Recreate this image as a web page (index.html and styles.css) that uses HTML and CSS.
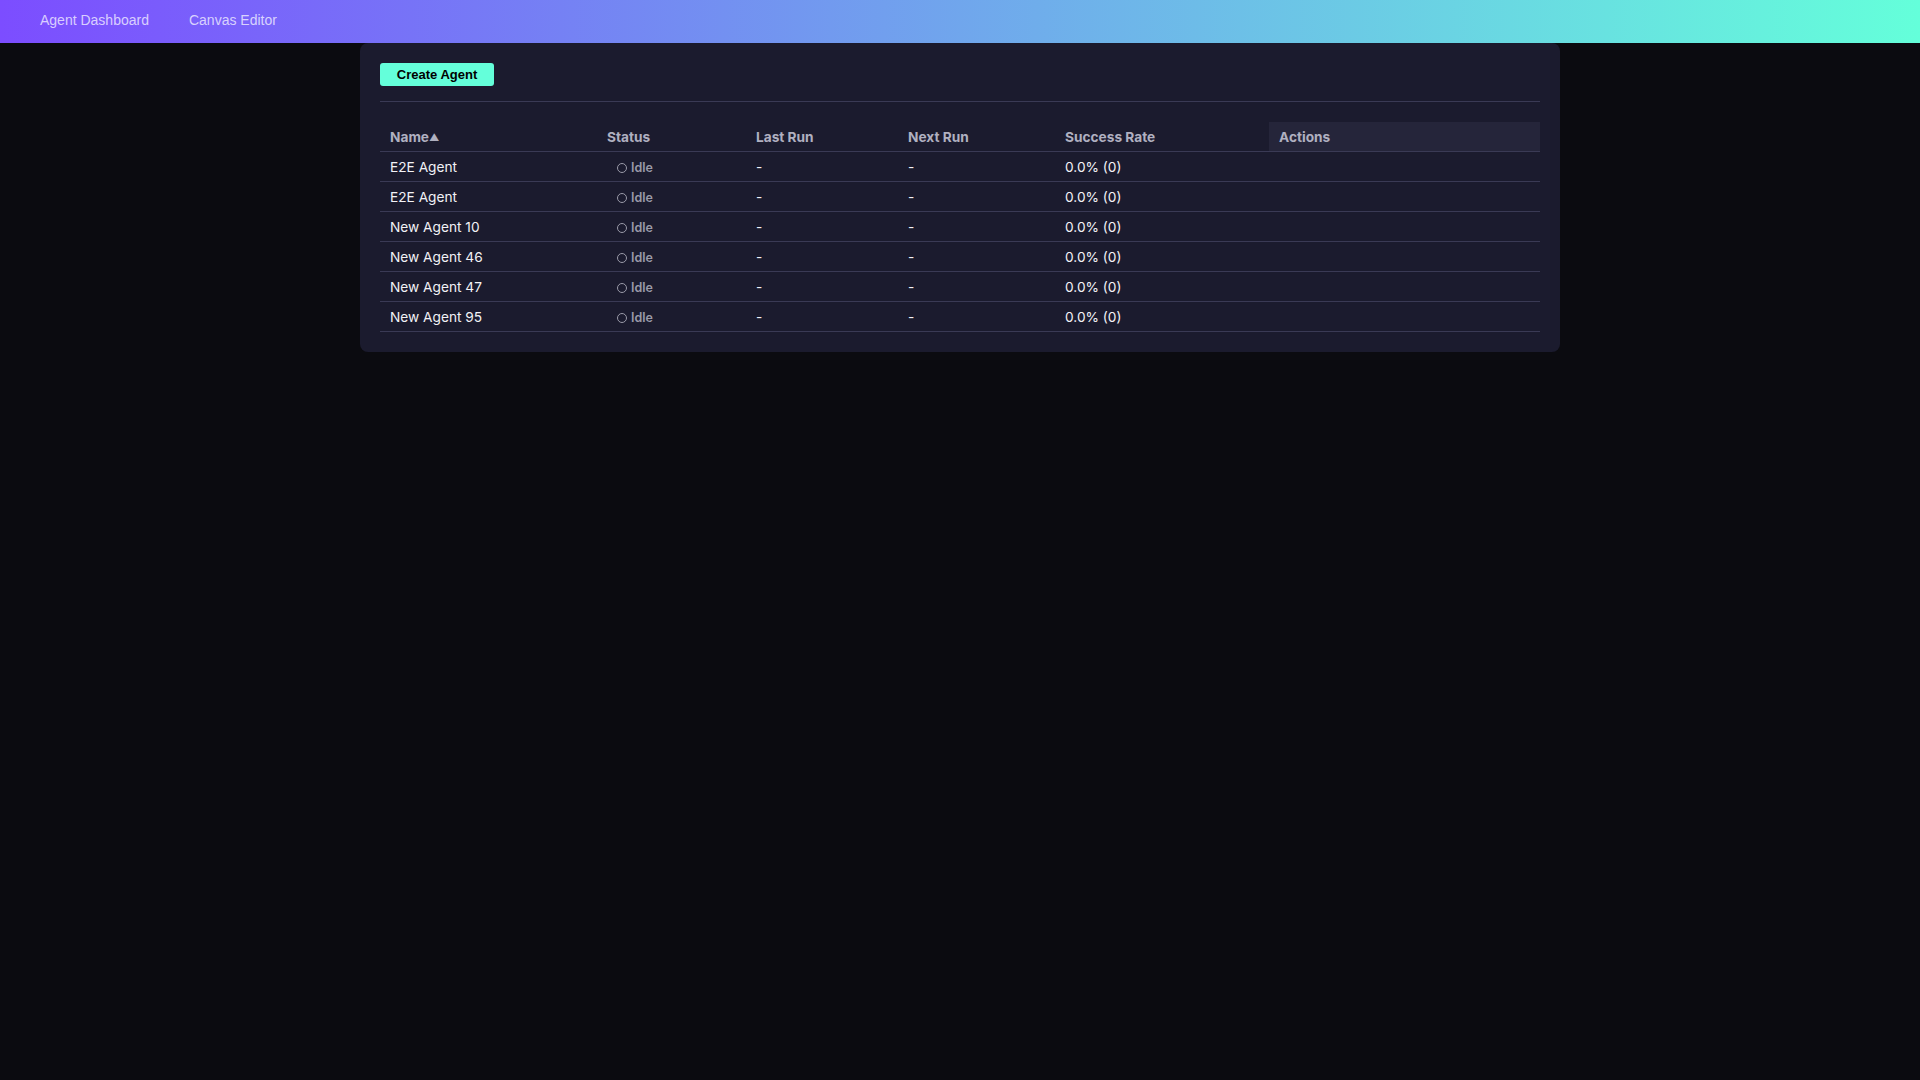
FILE: index.html
```html
<!DOCTYPE html>
<html>
<head>
<meta charset="utf-8">
<title>Agent Dashboard</title>
<link rel="stylesheet" href="styles.css">
</head>
<body>
<header class="topbar">
  <nav class="nav">
    <a class="nav-link" href="#">Agent Dashboard</a>
    <a class="nav-link" href="#">Canvas Editor</a>
  </nav>
</header>
<main class="card">
  <div class="toolbar">
    <button class="btn-create">Create Agent</button>
  </div>
  <table class="agents">
    <colgroup>
      <col class="c-name"><col class="c-status"><col class="c-last"><col class="c-next"><col class="c-rate"><col class="c-actions">
    </colgroup>
    <thead>
      <tr>
        <th>Name<span class="sort">▲</span></th>
        <th>Status</th>
        <th>Last Run</th>
        <th>Next Run</th>
        <th>Success Rate</th>
        <th class="th-actions">Actions</th>
      </tr>
    </thead>
    <tbody>
      <tr><td>E2E Agent</td><td><span class="status"><span class="dot"></span>Idle</span></td><td>-</td><td>-</td><td>0.0% (0)</td><td></td></tr>
      <tr><td>E2E Agent</td><td><span class="status"><span class="dot"></span>Idle</span></td><td>-</td><td>-</td><td>0.0% (0)</td><td></td></tr>
      <tr><td>New Agent 10</td><td><span class="status"><span class="dot"></span>Idle</span></td><td>-</td><td>-</td><td>0.0% (0)</td><td></td></tr>
      <tr><td>New Agent 46</td><td><span class="status"><span class="dot"></span>Idle</span></td><td>-</td><td>-</td><td>0.0% (0)</td><td></td></tr>
      <tr><td>New Agent 47</td><td><span class="status"><span class="dot"></span>Idle</span></td><td>-</td><td>-</td><td>0.0% (0)</td><td></td></tr>
      <tr><td>New Agent 95</td><td><span class="status"><span class="dot"></span>Idle</span></td><td>-</td><td>-</td><td>0.0% (0)</td><td></td></tr>
    </tbody>
  </table>
</main>
</body>
</html>
```
FILE: styles.css
```css
* { box-sizing: border-box; }
html, body {
  margin: 0;
  padding: 0;
  background: #0b0b10;
  min-height: 100%;
}
body {
  font-family: Inter, "Noto Sans", sans-serif;
  color: #ececf2;
}
.topbar {
  height: 43px;
  background: linear-gradient(90deg, #7c4dff 0%, #64ffda 100%);
  display: flex;
  align-items: flex-start;
  padding-top: 10px;
}
.nav {
  display: flex;
  padding-left: 20px;
}
.nav-link {
  font-family: "Liberation Sans", Arial, sans-serif;
  font-size: 14px;
  color: rgba(255, 255, 255, 0.72);
  text-decoration: none;
  padding: 0 20px;
  line-height: 20px;
}
.card {
  width: 1200px;
  margin: 0 auto;
  background: #1b1b2e;
  border-radius: 8px;
  padding: 20px;
}
.toolbar {
  padding-bottom: 15px;
  border-bottom: 1px solid #3a3a55;
  margin-bottom: 20px;
  display: flex;
}
.btn-create {
  font-family: "Liberation Sans", Arial, sans-serif;
  font-weight: bold;
  font-size: 13px;
  line-height: 15px;
  padding: 4px 16px;
  height: 23px;
  width: 114px;
  border: none;
  border-radius: 3px;
  background: #64ffda;
  color: #000;
}
.agents {
  width: 1160px;
  border-collapse: collapse;
  table-layout: fixed;
  font-size: 13.7px;
}
.c-name { width: 217px; }
.c-status { width: 149px; }
.c-last { width: 152px; }
.c-next { width: 157px; }
.c-rate { width: 214px; }
.c-actions { width: 271px; }
.agents th {
  text-align: left;
  font-weight: 700;
  color: #b0b0c0;
  height: 29px;
  padding: 1px 10px 0;
  border-bottom: 1px solid #3a3a55;
}
.agents th.th-actions {
  background: #25253a;
}
.sort {
  font-size: 10px;
  vertical-align: 1px;
}
.agents td {
  height: 30px;
  padding: 1px 10px 0;
  border-bottom: 1px solid #3a3a55;
  color: #f2f2f6;
}
.status {
  display: inline-block;
  padding-left: 10px;
  font-size: 12.5px;
  font-weight: 600;
  color: #9a9aa8;
}
.dot {
  display: inline-block;
  width: 10px;
  height: 10px;
  margin-right: 4px;
  vertical-align: -1px;
  border: 1.5px solid #9a9aa8;
  border-radius: 50%;
}
```
